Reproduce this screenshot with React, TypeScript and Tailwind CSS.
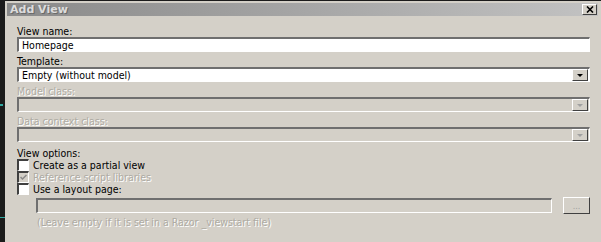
import React from "react";

/* classic sunken field border */
const sunken =
  "border-t-2 border-l-2 border-t-[#6f6f6f] border-l-[#6f6f6f] border-b border-r border-b-white border-r-white";

function Label({ text, disabled }: { text: string; disabled?: boolean }) {
  return (
    <div
      className={
        "h-[12px] leading-[12px] " +
        (disabled ? "text-[#aeaba3] [text-shadow:1px_1px_0_#ffffff]" : "text-black")
      }
    >
      {text}
    </div>
  );
}

function DropButton({ disabled }: { disabled?: boolean }) {
  return (
    <div className="flex h-full w-[16px] items-center justify-center border border-t-white border-l-white border-b-[#404040] border-r-[#404040] bg-[#d4d0c8]">
      <div
        className={
          "h-0 w-0 border-l-[3px] border-r-[3px] border-t-[3px] border-l-transparent border-r-transparent " +
          (disabled ? "border-t-[#a0a0a0]" : "border-t-black")
        }
      />
    </div>
  );
}

function Select({ value, disabled }: { value?: string; disabled?: boolean }) {
  return (
    <div
      className={
        "flex h-[15px] items-stretch " +
        sunken +
        (disabled ? " bg-[#d4d0c8]" : " bg-white")
      }
    >
      <div className="flex-1 pl-[3px] leading-[12px] text-black">{value}</div>
      <div className="pr-[1px]">
        <DropButton disabled={disabled} />
      </div>
    </div>
  );
}

function Check({
  label,
  checked,
  disabled,
}: {
  label: string;
  checked?: boolean;
  disabled?: boolean;
}) {
  return (
    <div className="flex h-[12px] items-center gap-[4px]">
      <div
        className={
          "flex h-[12px] w-[12px] items-center justify-center border-t-2 border-l-2 border-t-[#404040] border-l-[#404040] border-b border-r border-b-white border-r-white " +
          (disabled ? "bg-[#d4d0c8]" : "bg-white")
        }
      >
        {checked && (
          <svg width="7" height="7" viewBox="0 0 7 7">
            <path d="M0.5 3 L2.5 5 L6.5 1" stroke="#8a8a8a" strokeWidth="1.5" fill="none" />
          </svg>
        )}
      </div>
      <span
        className={
          "leading-[12px] " +
          (disabled ? "text-[#aeaba3] [text-shadow:1px_1px_0_#ffffff]" : "text-black")
        }
      >
        {label}
      </span>
    </div>
  );
}

export default function App() {
  return (
    <div className="flex h-[242px] w-[601px] overflow-hidden bg-[#1b1b1b] font-['DejaVu_Sans_Condensed','DejaVu_Sans',sans-serif] text-[10.5px]">
      {/* editor strip behind the dialog */}
      <div className="flex w-[5px] flex-col">
        <div className="h-[104px]" />
        <div className="h-[2px] w-[3px] bg-[#2fa8a0]" />
        <div className="h-[111px]" />
        <div className="h-[1px] w-[5px] bg-[#2fa8a0]" />
      </div>

      {/* dialog */}
      <div className="mt-[1px] flex flex-1 flex-col bg-[#d4d0c8] pt-[2px] pl-[2px] pr-[3px]">
        {/* title bar */}
        <div className="flex h-[13px] items-center justify-between bg-gradient-to-r from-[#8a8a8a] to-[#c2c2c2] pl-[3px] pr-[1px]">
          <span className="font-['DejaVu_Sans','Noto_Sans',sans-serif] text-[11px] font-bold leading-[12px] text-[#dcdcdc] [text-shadow:1px_1px_0_#6a6a6a]">
            Add View
          </span>
          <div className="flex h-[11px] w-[15px] items-center justify-center border border-t-white border-l-white border-b-[#404040] border-r-[#404040] bg-[#d4d0c8]">
            <svg width="8" height="7" viewBox="0 0 8 7">
              <path d="M1 0.5 L7 6.5 M7 0.5 L1 6.5" stroke="black" strokeWidth="1.6" />
            </svg>
          </div>
        </div>

        {/* body */}
        <div className="flex flex-col pl-[10px] pr-[8px] pt-[9px]">
          <Label text="View name:" />
          <div className={"flex h-[15px] items-center bg-white pl-[3px] leading-[12px] " + sunken}>
            Homepage
          </div>

          <div className="mt-[3px]">
            <Label text="Template:" />
          </div>
          <Select value="Empty (without model)" />

          <div className="mt-[3px]">
            <Label text="Model class:" disabled />
          </div>
          <Select disabled />

          <div className="mt-[3px]">
            <Label text="Data context class:" disabled />
          </div>
          <Select disabled />

          <div className="mt-[5px]">
            <Label text="View options:" />
          </div>
          <Check label="Create as a partial view" />
          <Check label="Reference script libraries" checked disabled />
          <Check label="Use a layout page:" />

          <div className="mt-[2px] flex items-center gap-[11px] pl-[19px]">
            <div className={"h-[15px] flex-1 bg-[#d4d0c8] " + sunken} />
            <div className="flex h-[17px] w-[27px] items-center justify-center border border-t-white border-l-white border-b-[#404040] border-r-[#404040] bg-[#d4d0c8] text-[9px] leading-[10px] text-[#a0a0a0]">
              ...
            </div>
          </div>
          <div className="mt-[2px] pl-[20px]">
            <Label text="(Leave empty if it is set in a Razor _viewstart file)" disabled />
          </div>
        </div>
      </div>
    </div>
  );
}
